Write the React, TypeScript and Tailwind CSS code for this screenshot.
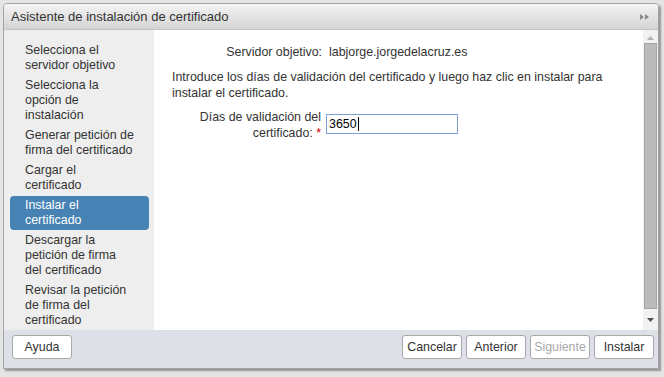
import React from "react";

const steps = [
  "Selecciona el servidor objetivo",
  "Selecciona la opción de instalación",
  "Generar petición de firma del certificado",
  "Cargar el certificado",
  "Instalar el certificado",
  "Descargar la petición de firma del certificado",
  "Revisar la petición de firma del certificado",
];

const ACTIVE = 4;

const Btn = ({ label, disabled = false }: { label: string; disabled?: boolean }) => (
  <button
    className={`h-[24px] w-[60px] rounded-[3px] border border-[#a9a9a9] bg-white text-[12.4px] leading-none ${
      disabled ? "text-[#a8a8a8]" : "text-[#333]"
    }`}
  >
    {label}
  </button>
);

export default function App() {
  return (
    <div
      className="h-[377px] w-[664px] bg-[#e4e4e4] pl-[3px] pt-[3px]"
      style={{ fontFamily: '"Liberation Sans", Arial, sans-serif' }}
    >
      <div className="flex h-[366px] w-[656px] flex-col overflow-hidden rounded-t-[4px] border border-[#a3a3a3] shadow-[2px_2px_2px_rgba(0,0,0,0.35)]">
        {/* title */}
        <div className="flex h-[26px] shrink-0 items-center justify-between border-b border-[#c4c4c4] bg-gradient-to-b from-[#f4f4f4] to-[#d4d4d4] pl-[7px] pr-[9px]">
          <span className="text-[13px] text-[#333]">Asistente de instalación de certificado</span>
          <svg width="9" height="8" viewBox="0 0 9 8">
            <path d="M0 1 L4 4 L0 7 Z M5 1 L9 4 L5 7 Z" fill="#8a8a8a" />
          </svg>
        </div>

        {/* body */}
        <div className="flex h-[300px] shrink-0">
          <div className="w-[150px] shrink-0 bg-[#eeeeee] pl-[6px] pt-[11px]">
            {steps.map((s, i) => (
              <div
                key={s}
                className={`mb-[1px] w-[139px] rounded-[4px] py-[2px] pl-[15px] pr-[14px] text-[12.4px] leading-[15px] ${
                  i === ACTIVE ? "bg-[#4682b4] text-white" : "text-[#333]"
                }`}
              >
                {s}
              </div>
            ))}
          </div>

          <div className="flex-1 bg-white pl-[18px] pt-[14px] text-[12.4px] text-[#333]">
            <div className="grid grid-cols-[150px_1fr] gap-x-[7px] leading-[16px]">
              <div className="text-right">Servidor objetivo:</div>
              <div>labjorge.jorgedelacruz.es</div>
            </div>
            <p className="mt-[9px] w-[440px] leading-[16px]">
              Introduce los días de validación del certificado y luego haz clic en instalar para instalar el certificado.
            </p>
            <div className="mt-[8px] grid grid-cols-[149px_1fr] gap-x-[5px] leading-[16px]">
              <div className="text-right">
                Días de validación del certificado: <span className="text-[#d00]">*</span>
              </div>
              <div className="pt-[5px]">
                <div className="flex h-[20px] w-[132px] items-center border border-[#7c9fd6] pl-[2px] text-black">
                  3650<span className="ml-[1px] inline-block h-[14px] w-px bg-black" />
                </div>
              </div>
            </div>
          </div>

          {/* scrollbar */}
          <div className="flex w-[15px] shrink-0 flex-col items-center bg-[#f1f1f1]">
            <svg className="mt-[6px]" width="7" height="4" viewBox="0 0 7 4">
              <path d="M0 4 L3.5 0 L7 4 Z" fill="#b0b0b0" />
            </svg>
            <div className="mt-[3px] h-[266px] w-[13px] border border-[#a4a4a4] bg-[#bbbbbb]" />
            <svg className="mt-[9px]" width="7" height="4" viewBox="0 0 7 4">
              <path d="M0 0 L7 0 L3.5 4 Z" fill="#505050" />
            </svg>
          </div>
        </div>

        {/* footer */}
        <div className="flex flex-1 items-start justify-between bg-[#dde0e6] pl-[8px] pr-[4px] pt-[5px]">
          <Btn label="Ayuda" />
          <div className="flex gap-[4px]">
            <Btn label="Cancelar" />
            <Btn label="Anterior" />
            <Btn label="Siguiente" disabled />
            <Btn label="Instalar" />
          </div>
        </div>
      </div>
    </div>
  );
}
